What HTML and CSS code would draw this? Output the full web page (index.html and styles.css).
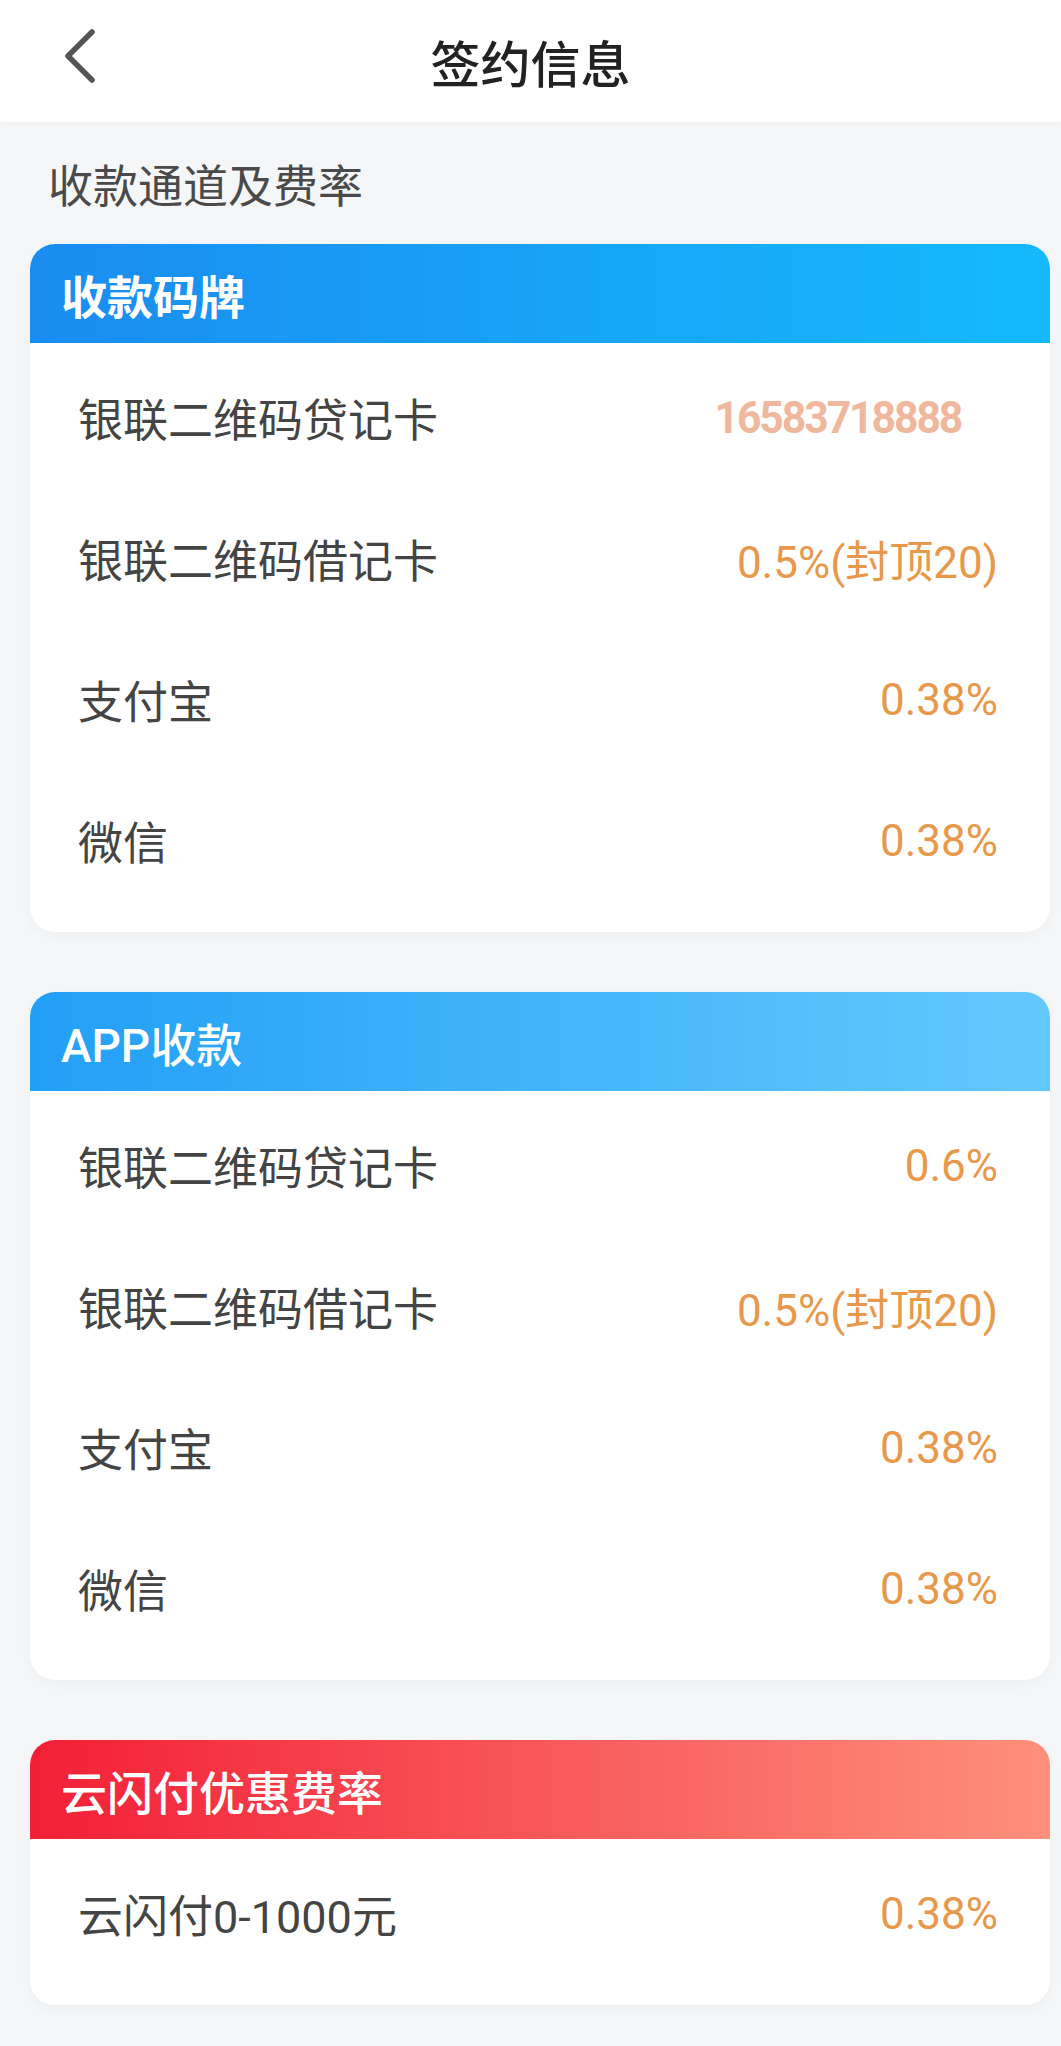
FILE: index.html
```
<!DOCTYPE html>
<html lang="zh-CN">
<head>
    <meta charset="UTF-8">
    <title>签约信息</title>
    <link rel="stylesheet" href="styles.css">
</head>
<body>
<header class="topbar">
    <a class="back" href="#">
        <svg width="34" height="54" viewBox="0 0 34 54">
            <polyline points="30,3 6,27 30,51" fill="none" stroke="#555" stroke-width="5.5" stroke-linecap="round" stroke-linejoin="round"/>
        </svg>
    </a>
    <h1>签约信息</h1>
</header>

<main class="page">
    <div class="section-title">收款通道及费率</div>

    <section class="card">
        <div class="card-head head-blue">收款码牌</div>
        <div class="card-body">
            <div class="row">
                <span class="label">银联二维码贷记卡</span>
                <span class="mark">16583718888</span>
            </div>
            <div class="row">
                <span class="label">银联二维码借记卡</span>
                <span class="value">0.5%(封顶20)</span>
            </div>
            <div class="row">
                <span class="label">支付宝</span>
                <span class="value">0.38%</span>
            </div>
            <div class="row">
                <span class="label">微信</span>
                <span class="value">0.38%</span>
            </div>
        </div>
    </section>

    <section class="card">
        <div class="card-head head-light">APP收款</div>
        <div class="card-body">
            <div class="row">
                <span class="label">银联二维码贷记卡</span>
                <span class="value">0.6%</span>
            </div>
            <div class="row">
                <span class="label">银联二维码借记卡</span>
                <span class="value">0.5%(封顶20)</span>
            </div>
            <div class="row">
                <span class="label">支付宝</span>
                <span class="value">0.38%</span>
            </div>
            <div class="row">
                <span class="label">微信</span>
                <span class="value">0.38%</span>
            </div>
        </div>
    </section>

    <section class="card">
        <div class="card-head head-red">云闪付优惠费率</div>
        <div class="card-body">
            <div class="row">
                <span class="label">云闪付0-1000元</span>
                <span class="value">0.38%</span>
            </div>
        </div>
    </section>
</main>
</body>
</html>
```

FILE: styles.css
```
* {
    box-sizing: border-box;
    font-family: Roboto, "Noto Sans CJK SC", sans-serif;
}
body {
    margin: 0;
    background: #f5f6f8;
    color: #444;
}
.topbar {
    height: 122px;
    background: #fff;
    display: flex;
    align-items: center;
    justify-content: center;
    position: relative;
    box-shadow: 0 2px 6px rgba(0, 0, 0, 0.03);
}
.topbar h1 {
    margin: 0;
    font-size: 50px;
    font-weight: 500;
    color: #222;
    font-family: "Noto Sans CJK SC", sans-serif;
}
.back {
    position: absolute;
    left: 62px;
    top: 29px;
    display: block;
    line-height: 0;
}
.page {
    padding: 36px 11px 40px 30px;
}
.section-title {
    font-size: 45px;
    line-height: 60px;
    color: #4a4a4a;
    padding-left: 18px;
    margin-bottom: 26px;
}
.card {
    background: #fff;
    border-radius: 25px;
    overflow: hidden;
    margin-bottom: 60px;
    box-shadow: 0 4px 14px rgba(0, 0, 0, 0.03);
}
.card-head {
    height: 99px;
    display: flex;
    align-items: center;
    padding-left: 31px;
    color: #fff;
    font-size: 46px;
    font-weight: 500;
}
.head-blue {
    background: linear-gradient(90deg, #1a8cf0, #15b9fc);
    font-weight: 600;
}
.head-light {
    background: linear-gradient(90deg, #229ff6, #63c9fd);
}
.head-red {
    background: linear-gradient(90deg, #f31f37, #fd907c);
}
.card-body {
    padding: 4px 52px 21px 48px;
}
.row {
    height: 141px;
    display: flex;
    align-items: center;
    justify-content: space-between;
}
.label {
    font-size: 45px;
    color: #444;
}
.value {
    font-size: 44px;
    color: #e8984a;
}
.mark {
    font-size: 45px;
    font-weight: 700;
    letter-spacing: -2.2px;
    color: #efb79c;
    margin-right: 30px;
    transform: scaleX(0.95);
}
```
